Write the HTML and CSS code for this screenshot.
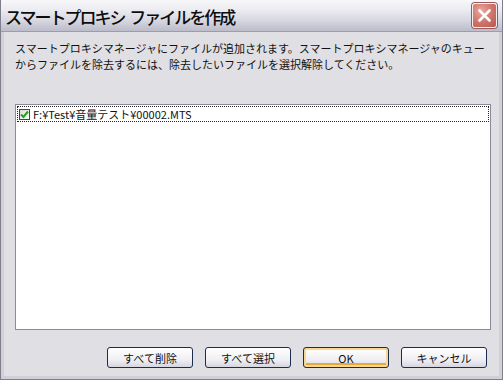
FILE: index.html
```html
<!DOCTYPE html>
<html lang="ja">
<head>
    <meta charset="UTF-8">
    <title>スマートプロキシ ファイルを作成</title>
    <link rel="stylesheet" href="styles.css">
</head>
<body>
    <div class="window">
        <!-- タイトルバー -->
        <div class="titlebar">
            <span class="title">スマートプロキシ ファイルを作成</span>
            <div class="close-btn">
                <svg width="15" height="15" viewBox="0 0 15 15">
                    <path d="M2.5 2.5 L12.5 12.5 M12.5 2.5 L2.5 12.5" stroke="#fff" stroke-width="2.6" stroke-linecap="round"/>
                </svg>
            </div>
        </div>

        <div class="content">
            <div class="message">
                <div>スマートプロキシマネージャにファイルが追加されます。スマートプロキシマネージャのキュー</div>
                <div>からファイルを除去するには、除去したいファイルを選択解除してください。</div>
            </div>

            <!-- ファイル一覧 -->
            <div class="file-list">
                <div class="file-item">
                    <span class="checkbox">
                        <svg width="9" height="9" viewBox="0 0 9 9">
                            <path d="M1 4.5 L3.5 7 L8 1.5" fill="none" stroke="#21a121" stroke-width="2"/>
                        </svg>
                    </span>
                    <span class="file-name">F:¥Test¥音量テスト¥00002.MTS</span>
                </div>
            </div>

            <div class="buttons">
                <button class="btn">すべて削除</button>
                <button class="btn">すべて選択</button>
                <button class="btn btn-default">OK</button>
                <button class="btn">キャンセル</button>
            </div>
        </div>
    </div>
</body>
</html>
```

FILE: styles.css
```css
/* 全体 */
body {
    margin: 0;
    font-family: "Noto Sans CJK JP", "Liberation Sans", sans-serif;
    background: #e0dfe3;
}

.window {
    width: 503px;
    height: 380px;
    box-sizing: border-box;
    display: flex;
    flex-direction: column;
    background: #e0dfe3;
    border: 1px solid #7e7e8c;
    border-top: none;
}

/* タイトルバー */
.titlebar {
    height: 31px;
    flex-shrink: 0;
    display: flex;
    align-items: center;
    justify-content: space-between;
    padding: 0 5px 0 4px;
    background: linear-gradient(to bottom, #f8f8fa 0%, #ececf2 30%, #d8d8e2 65%, #bcbcca 100%);
    border-bottom: 1px solid #9c9cac;
}

.title {
    font-size: 17px;
    font-weight: 500;
    color: #0c0c0c;
    letter-spacing: -2px;
    word-spacing: 3px;
    padding-top: 1px;
}

.close-btn {
    width: 23px;
    height: 23px;
    border-radius: 3px;
    border: 1px solid #f4f0f0;
    display: flex;
    align-items: center;
    justify-content: center;
    background: radial-gradient(circle at 35% 30%, #eaa8a0 0%, #d47a70 45%, #b65650 100%);
    box-shadow: 0 0 0 1px #9a5a5a;
}

/* 本文 */
.content {
    flex: 1;
    display: flex;
    flex-direction: column;
    border-left: 3px solid #d0d0d8;
    border-right: 3px solid #d0d0d8;
    border-bottom: 3px solid #d0d0d8;
    padding: 8px 8px 0 11px;
}

.message {
    font-size: 11px;
    line-height: 16px;
    color: #111;
}

.file-list {
    margin-top: 32px;
    height: 226px;
    background: #fff;
    border: 1px solid #8a8a98;
    box-sizing: border-box;
    padding: 1px;
}

.file-item {
    display: flex;
    align-items: center;
    gap: 3px;
    height: 16px;
    padding-left: 2px;
    outline: 1px dotted #222;
    outline-offset: -1px;
}

.checkbox {
    width: 11px;
    height: 11px;
    box-sizing: border-box;
    border: 1px solid #1c5180;
    background: linear-gradient(135deg, #dcdcd4, #fff);
    display: flex;
    align-items: center;
    justify-content: center;
}

.file-name {
    font-size: 11px;
    color: #111;
}

/* ボタン */
.buttons {
    display: flex;
    justify-content: flex-end;
    gap: 12px;
    margin-top: 17px;
    padding-right: 4px;
}

.btn {
    width: 86px;
    height: 21px;
    padding: 0;
    font-family: inherit;
    font-size: 11px;
    color: #111;
    border: 1px solid #1c2c4c;
    border-radius: 3px;
    background: linear-gradient(to bottom, #ffffff 0%, #f0f0f4 60%, #d6d6e0 100%);
}

.btn-default {
    box-shadow: inset 0 0 0 2px #f8d890, inset 0 -2px 0 2px #e8a83c;
}
```
